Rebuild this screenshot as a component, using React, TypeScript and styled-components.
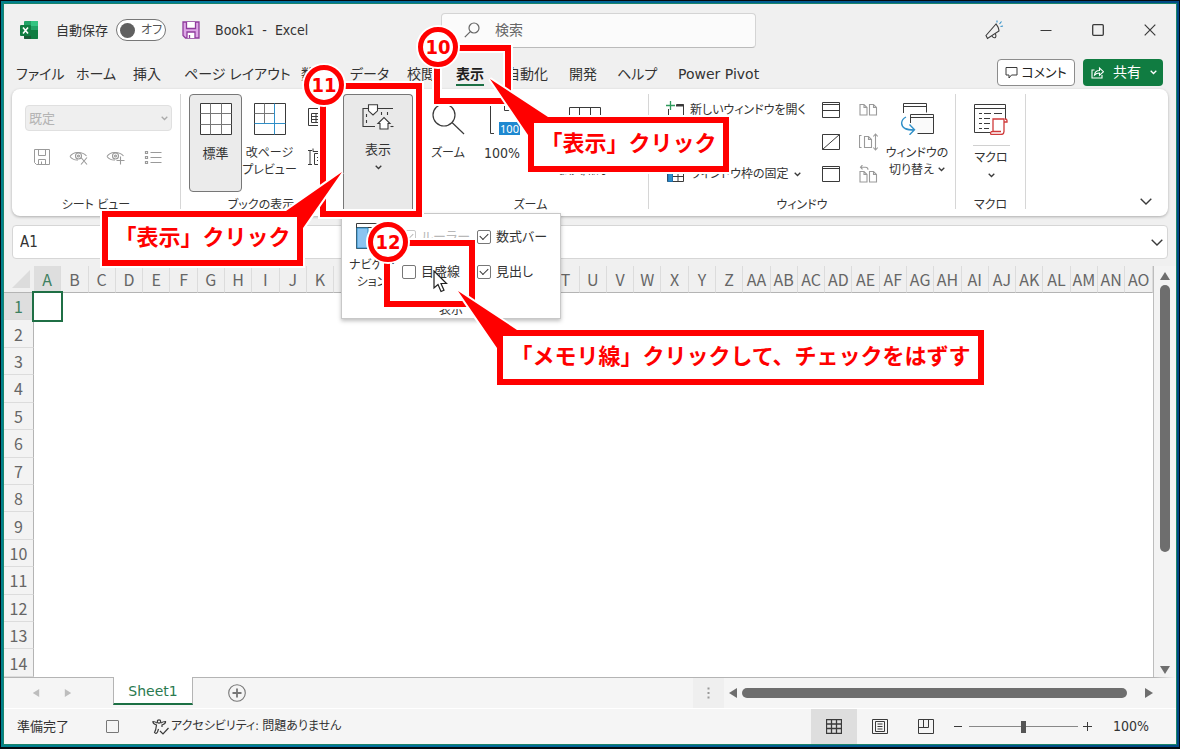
import React from "react";
import styled, { createGlobalStyle, css } from "styled-components";

const UI_FONT = `"DejaVu Sans Condensed", "Noto Sans CJK JP", sans-serif`;
const WIDE_FONT = `"DejaVu Sans", "Noto Sans CJK JP", sans-serif`;
const JP_FONT = `"Noto Sans CJK JP", sans-serif`;
const INK = "#3a3a3a";
const RED = "#ff0000";

const GlobalStyle = createGlobalStyle`
  *, *::before, *::after { box-sizing: border-box; }
  body {
    margin: 0;
    background: #00607f;
    color: #333;
    font: 13px/17px ${UI_FONT};
    font-feature-settings: "palt";
  }
  button, input, select {
    margin: 0;
    padding: 0;
    border: 0;
    background: none;
    color: inherit;
    font: inherit;
    font-feature-settings: inherit;
  }
  svg { display: block; flex: none; }
`;

/* ---------- window frame ---------- */

const Screen = styled.div`
  position: relative;
  height: 100vh;
  min-height: 640px;
  display: flex;
  border: 1px solid #050a10;
  border-bottom-width: 2px;
  padding: 2px;
  background: linear-gradient(90deg, #00808c, #0078a0 20%, #004a86);
`;

const AppWindow = styled.div`
  flex: 1;
  min-width: 0;
  display: flex;
  flex-direction: column;
  border: 1px solid #1a8468;
  background: #f0f0f0;
`;

/* ---------- title bar ---------- */

const TitleBar = styled.header`
  flex: none;
  height: 52px;
  display: grid;
  grid-template-columns: 1fr 315px 420px;
  align-items: center;
`;

const TitleLeft = styled.div`
  display: flex;
  align-items: center;
  padding-left: 16px;
`;

const AutoSave = styled.label`
  display: flex;
  align-items: center;
  gap: 8px;
  margin: 0 16px 0 18px;
`;

const Toggle = styled.button`
  display: flex;
  align-items: center;
  gap: 6px;
  width: 50px;
  height: 22px;
  padding-left: 3px;
  border: 1px solid #777;
  border-radius: 11px;
  background: #fff;
  color: #555;
  font-size: 12px;
  &::before {
    content: "";
    width: 15px;
    height: 15px;
    border-radius: 50%;
    background: #606060;
  }
`;

const DocTitle = styled.span`
  margin-left: 15px;
  font-size: 14px;
  white-space: pre;
`;

const SearchBox = styled.label`
  display: flex;
  align-items: center;
  gap: 15px;
  height: 35px;
  padding-left: 22px;
  border: 1px solid #d4d4d4;
  border-bottom-color: #bbb;
  border-radius: 4px;
  background: #fbfbfb;
  input {
    flex: 1;
    min-width: 0;
    font-size: 14px;
    outline: none;
  }
  input::placeholder { color: #666; opacity: 1; }
`;

const TitleRight = styled.div`
  display: flex;
  justify-content: flex-end;
  align-items: center;
  padding-right: 20px;
`;

const WindowButton = styled.button<{ $w?: number }>`
  width: ${(p) => p.$w ?? 52}px;
  height: 32px;
  display: flex;
  align-items: center;
  justify-content: flex-end;
`;

/* ---------- tabs ---------- */

const TabRow = styled.nav`
  flex: none;
  height: 33px;
  display: flex;
  align-items: center;
  padding: 0 13px 0 12px;
`;

const Tab = styled.button<{ $w: number; $active?: boolean; $latin?: boolean }>`
  width: ${(p) => p.$w}px;
  height: 28px;
  padding-top: 3px;
  text-align: left;
  white-space: nowrap;
  font-size: 14px;
  font-family: ${(p) => (p.$latin ? WIDE_FONT : UI_FONT)};
  ${(p) =>
    p.$active &&
    css`
      font-weight: 700;
      color: #1d1d1d;
      span {
        display: inline-block;
        padding: 3px 0 1px;
        border-bottom: 2px solid #1c7044;
      }
    `}
`;

const CommentButton = styled.button`
  display: flex;
  align-items: center;
  justify-content: center;
  gap: 3px;
  width: 78px;
  height: 27px;
  margin-left: auto;
  border: 1px solid #8c8c8c;
  border-radius: 4px;
  background: #fff;
  color: #222;
`;

const ShareButton = styled.button`
  display: flex;
  align-items: center;
  justify-content: space-between;
  width: 80px;
  height: 27px;
  margin-left: 8px;
  padding: 0 6px 0 8px;
  border-radius: 4px;
  background: #107c41;
  color: #fff;
  font-size: 14px;
`;

/* ---------- ribbon ---------- */

const Ribbon = styled.section`
  flex: none;
  display: flex;
  margin: 0 8px;
  padding: 5px 0 7px;
  border-radius: 8px;
  background: #fff;
  box-shadow: 0 1px 3px rgba(0, 0, 0, 0.28);
`;

const Group = styled.div<{ $w: number; $line?: boolean }>`
  flex: none;
  width: ${(p) => p.$w}px;
  height: 115px;
  display: flex;
  flex-direction: column;
  border-right: ${(p) => (p.$line ? "1px solid #d6d6d6" : "0")};
`;

const GroupBody = styled.div<{ $pad?: number }>`
  display: flex;
  align-items: flex-start;
  height: 105px;
  padding-left: ${(p) => p.$pad ?? 0}px;
`;

const GroupLabel = styled.div`
  height: 10px;
  line-height: 12px;
  font-size: 12px;
  text-align: center;
  white-space: nowrap;
`;

const SheetViewTools = styled.div`
  flex: 1;
  padding: 11px 8px 0 0;
`;

const ViewSelect = styled.div`
  position: relative;
  color: #b4b4b4;
  select {
    appearance: none;
    width: 100%;
    height: 26px;
    padding-left: 3px;
    border: 1px solid #e0e0e0;
    border-radius: 4px;
    background: #efefef;
    color: #b4b4b4;
    opacity: 1;
  }
  svg {
    position: absolute;
    right: 4px;
    top: 11px;
  }
`;

const ToolRow = styled.div`
  display: flex;
  justify-content: space-between;
  padding: 16px 9px 0 7px;
`;

const ToolButton = styled.button`
  display: flex;
  width: 20px;
  height: 20px;
  align-items: center;
  justify-content: center;
`;

const BigButton = styled.button<{ $w: number; $selected?: boolean }>`
  flex: none;
  width: ${(p) => p.$w}px;
  height: 98px;
  display: flex;
  flex-direction: column;
  align-items: center;
  padding-top: ${(p) => (p.$selected ? 8 : 9)}px;
  border: ${(p) => (p.$selected ? "1px solid #777" : "0")};
  border-radius: 4px;
  background: ${(p) => (p.$selected ? "#ebebeb" : "none")};
  white-space: nowrap;
  font-size: 12px;
`;

const BigText = styled.span<{ $size?: number }>`
  display: block;
  margin-top: 10px;
  font-size: ${(p) => p.$size ?? 12}px;
  line-height: 17px;
  svg { display: inline-block; margin-left: 4px; vertical-align: 2px; }
`;

const MacroText = styled.span`
  display: flex;
  flex-direction: column;
  align-items: center;
  gap: 6px;
  width: 37px;
  margin-top: 10px;
  padding-top: 4px;
  border-top: 1px solid #d0d0d0;
  line-height: 17px;
`;

const SideIcons = styled.div`
  padding: 14px 0 0 11px;
  display: flex;
  flex-direction: column;
  gap: 22px;
`;

const ViewHolder = styled.div`
  position: relative;
  margin: 0 0 0 2px;
`;

const ViewButton = styled.button`
  width: 70px;
  height: 119px;
  display: flex;
  flex-direction: column;
  align-items: center;
  padding-top: 9px;
  border: 1px solid #777;
  border-bottom: 0;
  border-radius: 4px 4px 0 0;
  background: #e9e9e9;
  span { margin: 11px 0 7px; line-height: 17px; }
`;

const List = styled.div`
  width: 155px;
`;

const ListButton = styled.button`
  display: flex;
  align-items: center;
  gap: 5px;
  height: 32px;
  font-size: 12px;
  white-space: nowrap;
`;

const IconColumn = styled.div`
  width: 20px;
  margin-right: 17px;
  button { height: 32px; display: flex; align-items: center; width: 20px; justify-content: center; }
`;

const CollapseButton = styled.button`
  align-self: flex-end;
  margin: 0 16px 2px auto;
  padding: 2px 0;
`;

/* ---------- drop-down panel ---------- */

const Panel = styled.div`
  position: absolute;
  z-index: 2;
  left: -2px;
  top: 119px;
  width: 220px;
  height: 106px;
  display: flex;
  flex-direction: column;
  border: 1px solid #c8c8c8;
  background: #fff;
  box-shadow: 0 2px 4px rgba(0, 0, 0, 0.25);
`;

const PanelBody = styled.div`
  display: flex;
  flex: 1;
`;

const NavButton = styled.button`
  width: 60px;
  display: flex;
  flex-direction: column;
  align-items: center;
  padding-top: 9px;
  font-size: 12px;
  line-height: 17px;
  span { margin-top: 8px; }
`;

const CheckGrid = styled.div`
  display: grid;
  grid-template-columns: 75px 75px;
  grid-template-rows: 35px 35px;
  padding-top: 5px;
`;

const Check = styled.label<{ $off?: boolean }>`
  display: flex;
  align-items: center;
  gap: 5px;
  white-space: nowrap;
  color: ${(p) => (p.$off ? "#b8b8b8" : "#333")};
  input {
    appearance: none;
    position: relative;
    flex: none;
    width: 14px;
    height: 14px;
    border: 1px solid ${(p) => (p.$off ? "#c8c8c8" : "#777")};
    border-radius: 2px;
    background: #fff;
  }
  input:checked::after {
    content: "";
    position: absolute;
    left: 2px;
    top: 2px;
    width: 8px;
    height: 5px;
    border: solid currentColor;
    border-width: 0 0 1px 1px;
    transform: rotate(-45deg);
  }
`;

const PanelLabel = styled.div`
  height: 16px;
  line-height: 16px;
  font-size: 12px;
  text-align: center;
`;

/* ---------- formula bar ---------- */

const FormulaBar = styled.div`
  flex: none;
  display: flex;
  align-items: center;
  height: 34px;
  margin: 9px 8px 7px;
  padding: 0 4px 0 7px;
  border: 1px solid #d6d6d6;
  border-radius: 4px;
  background: #fff;
  font-size: 15px;
`;

const NameBox = styled.input`
  width: 90px;
  outline: none;
`;

const FormulaInput = styled.input`
  flex: 1;
  min-width: 0;
  outline: none;
`;

/* ---------- sheet ---------- */

const SheetArea = styled.main`
  flex: 1;
  min-height: 0;
  display: grid;
  grid-template-columns: minmax(0, 1fr) 22px;
  grid-template-rows: minmax(0, 1fr);
  background: #f3f3f3;
`;

const Grid = styled.table`
  width: 100%;
  height: 100%;
  table-layout: fixed;
  border-collapse: separate;
  border-spacing: 0;
  background: #fff;
  border-right: 1px solid #bdbdbd;
  font-family: ${JP_FONT};
  color: #666;
  th, td { padding: 0; }
`;

const Corner = styled.th`
  width: 30px;
  height: 27px;
  background: #f0f0f0;
  border-bottom: 1px solid #b4b4b4;
  svg { margin: 0 0 0 8px; }
`;

const ColHead = styled.th<{ $on?: boolean }>`
  height: 27px;
  border-bottom: 1px solid ${(p) => (p.$on ? "#217346" : "#b4b4b4")};
  border-right: 1px solid #dcdcdc;
  background: ${(p) => (p.$on ? "#dedede" : "#f0f0f0")};
  color: ${(p) => (p.$on ? "#3d8060" : "inherit")};
  font-weight: 400;
  font-size: 16px;
  line-height: 20px;
`;

const RowHead = styled.th<{ $on?: boolean }>`
  border-right: 1px solid #b4b4b4;
  border-bottom: 1px solid #dcdcdc;
  background: ${(p) => (p.$on ? "#dedede" : "#f3f3f3")};
  color: ${(p) => (p.$on ? "#3d8060" : "inherit")};
  font-weight: 400;
  font-size: 16px;
  line-height: 20px;
`;

const ActiveCell = styled.td`
  position: relative;
  &::after {
    content: "";
    position: absolute;
    inset: -2px;
    border: 2px solid #1f6f45;
  }
`;

const VScroll = styled.div`
  display: flex;
  flex-direction: column;
  align-items: center;
  padding: 5px 0 2px;
`;

const VThumb = styled.div`
  width: 10px;
  height: 66%;
  margin: 4px 0 auto;
  border-radius: 5px;
  background: #6e6e6e;
`;

/* ---------- sheet tabs ---------- */

const SheetTabs = styled.div`
  flex: none;
  display: flex;
  align-items: center;
  height: 32px;
  background: #f5f5f5;
  border-bottom: 1px solid #fff;
`;

const TabsLeft = styled.div`
  flex: 1;
  align-self: stretch;
  display: flex;
  align-items: center;
  border-top: 1px solid #b4b4b4;
`;

const TabNav = styled.div`
  display: flex;
  width: 109px;
  padding-left: 28px;
  gap: 24px;
`;

const SheetTab = styled.button`
  align-self: flex-start;
  width: 80px;
  height: 28px;
  margin-top: -1px;
  padding-top: 3px;
  border: solid #b4b4b4;
  border-width: 0 1px;
  border-bottom: 2px solid #1c7044;
  background: #fff;
  color: #2b7a50;
  font-size: 14px;
  font-family: ${WIDE_FONT};
`;

const AddSheet = styled.button`
  margin-left: 35px;
`;

const HScroll = styled.div`
  width: 483px;
  align-self: stretch;
  display: flex;
  align-items: center;
  border-top: 1px solid #b4b4b4;
  border-right: 22px solid #f5f5f5;
`;

const Splitter = styled.div`
  width: 31px;
  align-self: stretch;
  display: flex;
  align-items: center;
  justify-content: center;
  background: #efefef;
  margin-right: 4px;
`;

const HThumb = styled.div`
  flex: 1;
  height: 10px;
  margin: 0 17px 0 4px;
  border-radius: 5px;
  background: #6e6e6e;
`;

/* ---------- status bar ---------- */

const StatusBar = styled.footer`
  flex: none;
  display: flex;
  align-items: center;
  height: 35px;
  padding: 0 25px 0 13px;
  background: #f5f5f5;
`;

const MacroRecord = styled.button`
  width: 13px;
  height: 13px;
  margin: 0 33px 0 37px;
  border: 1px solid #777;
  border-radius: 1px;
`;

const Accessibility = styled.button`
  display: flex;
  align-items: center;
  gap: 2px;
  white-space: nowrap;
  font-size: 12px;
`;

const ViewModes = styled.div`
  display: flex;
  align-self: stretch;
  margin-left: auto;
`;

const ViewMode = styled.button<{ $on?: boolean }>`
  width: 46px;
  display: flex;
  align-items: center;
  justify-content: center;
  background: ${(p) => (p.$on ? "#dedede" : "none")};
`;

const ZoomSlider = styled.input`
  appearance: none;
  width: 109px;
  height: 13px;
  margin: 0 5px;
  background: linear-gradient(#888, #888) center / 100% 1px no-repeat;
  &::-webkit-slider-thumb {
    appearance: none;
    width: 5px;
    height: 12px;
    background: #555;
  }
`;

const ZoomStep = styled.button`
  display: flex;
  padding: 4px 0;
`;

const ZoomValue = styled.button`
  width: 38px;
  margin-left: 21px;
  text-align: left;
  font-size: 14px;
`;

/* ---------- annotations ---------- */

const Notes = styled.div`
  position: absolute;
  inset: -1px;
  z-index: 5;
  pointer-events: none;
  font-family: ${JP_FONT};
  font-feature-settings: normal;
  color: ${RED};
`;

type Rect = { $x: number; $y: number; $w: number; $h: number };

const at = css<Rect>`
  position: absolute;
  left: ${(p) => p.$x}px;
  top: ${(p) => p.$y}px;
  width: ${(p) => p.$w}px;
  height: ${(p) => p.$h}px;
`;

const Frame = styled.div<Rect>`
  ${at}
  border: 6px solid ${RED};
  box-shadow: 0 0 0 2px #fff, inset 0 0 0 2px #fff;
`;

const Badge = styled.div<{ $x: number; $y: number }>`
  position: absolute;
  left: ${(p) => p.$x}px;
  top: ${(p) => p.$y}px;
  width: 40px;
  height: 40px;
  border: 5px solid ${RED};
  border-radius: 50%;
  background: #fff;
  box-shadow: 0 0 0 2px #fff;
  display: flex;
  align-items: center;
  justify-content: center;
  font: 700 20px/30px "DejaVu Sans Condensed", sans-serif;
`;

const Tails = styled.svg`
  position: absolute;
  left: 0;
  top: 0;
  paint-order: stroke;
`;

const Callout = styled.div<Rect>`
  ${at}
  display: flex;
  align-items: center;
  justify-content: center;
  padding-bottom: 8px;
  border: 6px solid ${RED};
  background: #fff;
  font-size: 22px;
  line-height: 30px;
  font-weight: 700;
  white-space: nowrap;
`;

const Pointer = styled.svg`
  position: absolute;
  left: 433px;
  top: 270px;
`;

/* ---------- icons ---------- */

type IconProps = {
  w?: number;
  h?: number;
  color?: string;
  sw?: number;
  children: React.ReactNode;
};

const Icon = ({ w = 16, h = w, color = INK, sw = 1, children }: IconProps) => (
  <svg width={w} height={h} viewBox={`0 0 ${w} ${h}`} fill="none" stroke={color} strokeWidth={sw} aria-hidden="true">
    {children}
  </svg>
);

const Chevron = ({ w = 7, color = INK }: { w?: number; color?: string }) => (
  <Icon w={w} h={Math.ceil(w / 2) + 1} color={color} sw={w > 9 ? 1.4 : 1.3}>
    <path d={`M.7 .8 L${w / 2} ${w / 2} L${w - 0.7} .8`} />
  </Icon>
);

const ExcelLogo = () => (
  <svg width="18" height="18" viewBox="0 0 18 18" aria-hidden="true">
    <path d="M5 0h12a1 1 0 0 1 1 1v16a1 1 0 0 1-1 1H5a1 1 0 0 1-1-1V1a1 1 0 0 1 1-1z" fill="#21a366" />
    <path d="M11 0h6a1 1 0 0 1 1 1v4h-7z" fill="#33c481" />
    <path d="M4 9h7v9H5a1 1 0 0 1-1-1z" fill="#185c37" />
    <path d="M11 9h7v8a1 1 0 0 1-1 1h-6z" fill="#107c41" />
    <rect y="4" width="11" height="11" rx="1" fill="#107c41" />
    <path d="M3 6.500l5 6M8 6.500l-5 6" stroke="#fff" strokeWidth="1.600" />
  </svg>
);

const SaveIcon = () => (
  <Icon w={18} color="#8f3b9c" sw={1.3}>
    <path d="M1 1h16v16H3.500L1 14.500z" fill="#dda6e6" />
    <path d="M4.500 1v6.500h9V1" fill="#fff" />
    <path d="M5 17v-6h8v6" fill="#fff" />
    <path d="M7.500 17v-3" />
  </Icon>
);

const SaveOutline = () => (
  <Icon w={18} color="#9a9a9a">
    <path d="M1.500 1.500h15v15h-13l-2-2zM5.500 1.500v6h7v-6M5.500 16.500v-5h7v5M8.500 16.500v-3" />
  </Icon>
);

const SearchIcon = () => (
  <Icon w={16} color="#666" sw={1.2}>
    <circle cx="10" cy="6" r="5" />
    <path d="M6.300 9.700L.8 15.200" />
  </Icon>
);

const EyeIcon = ({ plus }: { plus?: boolean }) => (
  <Icon w={20} color="#9a9a9a" sw={1.1}>
    <path d="M1 9.500C4 4.500 13 4 17.500 9M1 9.500c2 2.500 5 3.800 8 3.500" />
    <circle cx="9.500" cy="9" r="3" />
    <circle cx="9.500" cy="9" r="1" />
    {plus ? <path d="M14.500 9.500v8M10.500 13.500h8" /> : <path d="M12 10.500l6 7M18 10.500l-6 7" />}
  </Icon>
);

const OptionsIcon = () => (
  <Icon w={18} color="#9a9a9a" sw={1.2}>
    <path d="M6.500 4.500h11M6.500 9.500h11M6.500 14.500h11" />
    <path d="M1.500 3.500h2v2h-2zM1.500 8.500h2v2h-2zM1.500 13.500h2v2h-2z" />
  </Icon>
);

const NormalIcon = () => (
  <Icon w={32}>
    <path d="M.5.500h31v31H.500z" fill="#fff" />
    <path d="M10.500.500v31M21.500.500v31M.5 10.500h31M.5 21.500h31" stroke="#777" />
  </Icon>
);

const PageBreakIcon = () => (
  <Icon w={32}>
    <path d="M.5.500h31v31H.500z" fill="#fff" />
    <path d="M10.500.500v20M.5 10.500h20" stroke="#777" />
    <path d="M20.500.500v31M.5 20.500h31" stroke="#2f8fc8" />
  </Icon>
);

const PageLayoutIcon = () => (
  <Icon w={16} h={18}>
    <path d="M.5.500h11l4 4v13H.500zM3.500 5.500h9v9h-9zM3.500 8.500h9M3.500 11.500h9M8 5.500v9" />
  </Icon>
);

const CustomViewIcon = () => (
  <Icon w={16} h={18}>
    <path d="M0 2.500h4M2 2.500v14M0 16.500h4M6.500 5.500h9v11h-9zM5 .5v3h11M9 9.500h4M9 12.500h4" />
  </Icon>
);

const ShowIcon = () => (
  <Icon w={32} h={26} sw={1.1}>
    <path d="M6 4.500H1v18h12" />
    <path d="M6.500.8h9v6L11 11 6.500 6.800z" fill="#fff" />
    <path d="M15.500 4.500H31M4.500 10v3M4.500 16v3M19.500 8v3M25.500 8v3" />
    <path d="M16 19.500l6-6 6 6h-2v5.500h-8v-5.500z" fill="#fff" />
    <path d="M28.500 22.500h3" />
  </Icon>
);

const ZoomIcon = () => (
  <Icon w={34} h={32} sw={1.2}>
    <circle cx="13" cy="12" r="11" />
    <path d="M21 19.500L33 31" />
  </Icon>
);

const HundredIcon = () => (
  <svg width="36" height="32" viewBox="0 0 36 32" aria-hidden="true">
    <path d="M10 30.500H6.500V1.500h18l6 6V15" fill="none" stroke={INK} />
    <path d="M20.500 1.500v6h6" fill="none" stroke={INK} />
    <rect x="15" y="19" width="21" height="13" fill="#1e88d0" />
    <text x="25.500" y="30" fontSize="11" fill="#fff" textAnchor="middle" fontFamily="Noto Sans">
      100
    </text>
  </svg>
);

const SelectionZoomIcon = () => (
  <Icon w={32}>
    <path d="M.5 4.500h31v24H.500zM.5 12.500h31M.5 20.500h31M10.500 4.500v24M21.500 4.500v24" />
    <path d="M10 12.500h12" stroke="#2f8fc8" />
  </Icon>
);

const NewWindowIcon = () => (
  <Icon w={19} h={18}>
    <path d="M2.500 8v9.500h15v-14h-7" />
    <path d="M10 4.500h8" strokeWidth="2" />
    <path d="M4.500 0v9M0 4.500h9" stroke="#2e9a5c" strokeWidth="1.300" />
  </Icon>
);

const ArrangeIcon = () => (
  <Icon w={19} h={18}>
    <path d="M1.500 1.500h16v15h-16zM1.500 9h16M9.500 1.500v15" />
  </Icon>
);

const FreezeIcon = () => (
  <Icon w={19} h={18}>
    <path d="M1.500 1.500h16v15h-16zM1.500 6.500h16M1.500 11.500h16M6.500 1.500v15M12 1.500v15" />
    <path d="M2 7h4.500v9.500H2z" fill="#2f8fc8" stroke="#1e6fae" />
  </Icon>
);

const WinShape = ({ kind }: { kind: "split" | "hide" | "show" }) => (
  <Icon w={18} h={16}>
    <path d="M.5.500h17v15H.500z" />
    {kind === "split" && <path d="M.5 2.500h17M.5 8.500h17" />}
    {kind === "hide" && <path d="M.5 15.500l17-15" />}
    {kind === "show" && <path d="M.5 2.500h17" />}
  </Icon>
);

const PagesIcon = ({ kind }: { kind: "side" | "sync" | "reset" }) => (
  <Icon w={19} h={18} color="#9a9a9a" sw={1.1}>
    {kind === "sync" ? (
      <>
        <path d="M2.500 2.500H.500v12h2M5.500 3.500h4l3 3v8h-7zM9.500 3.500v3h3" />
        <path d="M16.500 1v16M14.300 3.500L16.500 1l2.200 2.500M14.300 14.500l2.200 2.500 2.200-2.500" />
      </>
    ) : (
      <>
        <path
          d="M1 6.500h4l3 3v7.500H1zM5 6.500v3h3M10.500 6.500h4l3 3v7.500h-7zM14.500 6.500v3h3"
          transform={kind === "side" ? "translate(0 -3)" : undefined}
        />
        {kind === "reset" && <path d="M3.500 0L1.500 2.200l2 2.200M1.500 2.200h5q2.500 0 2.500 2.500" />}
      </>
    )}
  </Icon>
);

const SwitchIcon = () => (
  <Icon w={34} h={32}>
    <path d="M3.500 10V.500h23v9" />
    <path d="M3.500 3.500h23" />
    <path d="M10.500 20v-8.500h23v19h-16" fill="#fafafa" />
    <path d="M10.500 14.500h23" />
    <path d="M6 14C.5 17 .3 22.500 5 25.500q3 1.500 9 1.500M9.500 21.500l5 5.300-5 5" stroke="#2f8fc8" strokeWidth="1.400" />
  </Icon>
);

const MacroIcon = () => (
  <Icon w={34} h={32}>
    <path d="M16 29.500H.500V1.500h31V16" />
    <path d="M.5 5.500h31" />
    <path d="M5 10.500h3M10 10.500h7M20 10.500h8M5 15.500h3M10 15.500h6M5 20.500h3M10 20.500h6M5 25.500h3M10 25.500h5" />
    <path d="M19 28V16h11v12.500q0 3-3 3H17q-1.500-3 2-3h8M30 19h3v-1.500q0-1.500-2-1.500" stroke="#cf3a3a" strokeWidth="1.300" fill="#fff" />
  </Icon>
);

const NavIcon = () => (
  <Icon w={32} h={26}>
    <path d="M.5.500h31v25H.500zM.5 4.500h31" />
    <path d="M1 5h11v20H1z" fill="#8cc4f0" stroke="#2f8fc8" />
  </Icon>
);

const MegaphoneIcon = () => (
  <Icon w={20} sw={1.1}>
    <path d="M12 4L2 15.500l1.500 3 11.500-7.500q0-1.500-1-4zM8 16q1.500 2.500 3.500 1.500 1-1 0-3.500" />
    <path d="M13 2.500V.500M15.500 4l2-2.500M16.500 6.500l2.500-.5" stroke="#2f8fc8" />
  </Icon>
);

const CommentIcon = () => (
  <Icon w={13}>
    <path d="M1 1.500h11v7.500H6.500l-2.500 3V9H1z" />
  </Icon>
);

const ShareIcon = () => (
  <Icon w={13} color="#fff" sw={1.1}>
    <path d="M3.500 4H1v8h10V9M3.500 9q.5-4.500 5-4.500V2l4 3.700-4 3.600V7q-3 0-5 2z" />
  </Icon>
);

const A11yIcon = () => (
  <Icon w={17} h={16} sw={1.2}>
    <circle cx="7" cy="2.500" r="1.700" />
    <path d="M5 4Q3 2.500 1 2.500q-.5 2 3.500 3.500-.5 5-2 7.500 1.500 2 3-.5l1-3M9 4q2-1.500 4.500-1.500.5 2-3.500 3.500v2" />
    <path d="M8 12l3 3 5.500-6" />
  </Icon>
);

const Arrow = ({ dir, color = "#6e6e6e", s = 10 }: { dir: "up" | "down" | "left" | "right"; color?: string; s?: number }) => {
  const points = {
    up: "5,1 10,9 0,9",
    down: "5,9 10,1 0,1",
    left: "1,5 9,0 9,10",
    right: "9,5 1,0 1,10",
  }[dir];
  return (
    <svg width={s} height={s} viewBox="0 0 10 10" aria-hidden="true">
      <polygon points={points} fill={color} />
    </svg>
  );
};

/* ---------- data ---------- */

const tabs = [
  { name: "ファイル", w: 60 },
  { name: "ホーム", w: 57 },
  { name: "挿入", w: 51 },
  { name: "ページ レイアウト", w: 117 },
  { name: "数式", w: 49 },
  { name: "データ", w: 57 },
  { name: "校閲", w: 49 },
  { name: "表示", w: 50, active: true },
  { name: "自動化", w: 63 },
  { name: "開発", w: 48 },
  { name: "ヘルプ", w: 61 },
  { name: "Power Pivot", w: 90, latin: true },
];

const columnName = (i: number): string =>
  (i >= 26 ? String.fromCharCode(64 + Math.floor(i / 26)) : "") + String.fromCharCode(65 + (i % 26));

const columns = Array.from({ length: 41 }, (_, i) => columnName(i));
const rows = Array.from({ length: 14 }, (_, i) => i + 1);

/* ---------- page ---------- */

const RibbonBar = () => (
  <Ribbon>
    <Group $w={169} $line>
      <GroupBody $pad={13}>
        <SheetViewTools>
          <ViewSelect>
            <select disabled aria-label="シート ビュー">
              <option>既定</option>
            </select>
            <Chevron color="#aaa" />
          </ViewSelect>
          <ToolRow>
            <ToolButton aria-label="保持"><SaveOutline /></ToolButton>
            <ToolButton aria-label="終了"><EyeIcon /></ToolButton>
            <ToolButton aria-label="新規"><EyeIcon plus /></ToolButton>
            <ToolButton aria-label="オプション"><OptionsIcon /></ToolButton>
          </ToolRow>
        </SheetViewTools>
      </GroupBody>
      <GroupLabel>シート ビュー</GroupLabel>
    </Group>

    <Group $w={160}>
      <GroupBody $pad={8}>
        <BigButton $w={53} $selected>
          <NormalIcon />
          <BigText $size={13}>標準</BigText>
        </BigButton>
        <BigButton $w={55}>
          <PageBreakIcon />
          <BigText>改ページ<br />プレビュー</BigText>
        </BigButton>
        <SideIcons>
          <PageLayoutIcon />
          <CustomViewIcon />
        </SideIcons>
      </GroupBody>
      <GroupLabel>ブックの表示</GroupLabel>
    </Group>

    <Group $w={72}>
      <ViewHolder>
        <ViewButton aria-expanded="true">
          <ShowIcon />
          <span>表示</span>
          <Chevron />
        </ViewButton>
        <Panel>
          <PanelBody>
            <NavButton>
              <NavIcon />
              <span>ナビゲー<br />ション</span>
            </NavButton>
            <CheckGrid>
              <Check $off><input type="checkbox" defaultChecked disabled />ルーラー</Check>
              <Check><input type="checkbox" defaultChecked />数式バー</Check>
              <Check><input type="checkbox" />目盛線</Check>
              <Check><input type="checkbox" defaultChecked />見出し</Check>
            </CheckGrid>
          </PanelBody>
          <PanelLabel>表示</PanelLabel>
        </Panel>
      </ViewHolder>
    </Group>

    <Group $w={236} $line>
      <GroupBody $pad={8}>
        <BigButton $w={54}>
          <ZoomIcon />
          <BigText>ズーム</BigText>
        </BigButton>
        <BigButton $w={54}>
          <HundredIcon />
          <BigText $size={14}>100%</BigText>
        </BigButton>
        <BigButton $w={112}>
          <SelectionZoomIcon />
          <BigText>選択範囲に合わせて<br />拡大/縮小</BigText>
        </BigButton>
      </GroupBody>
      <GroupLabel>ズーム</GroupLabel>
    </Group>

    <Group $w={307} $line>
      <GroupBody $pad={17}>
        <List>
          <ListButton><NewWindowIcon />新しいウィンドウを開く</ListButton>
          <ListButton><ArrangeIcon />整列</ListButton>
          <ListButton><FreezeIcon />ウィンドウ枠の固定<Chevron /></ListButton>
        </List>
        <IconColumn>
          <button aria-label="分割"><WinShape kind="split" /></button>
          <button aria-label="表示しない"><WinShape kind="hide" /></button>
          <button aria-label="再表示"><WinShape kind="show" /></button>
        </IconColumn>
        <IconColumn>
          <button aria-label="並べて比較"><PagesIcon kind="side" /></button>
          <button aria-label="同時にスクロール"><PagesIcon kind="sync" /></button>
          <button aria-label="ウィンドウの位置を元に戻す"><PagesIcon kind="reset" /></button>
        </IconColumn>
        <BigButton $w={44}>
          <SwitchIcon />
          <BigText>ウィンドウの<br />切り替え<Chevron /></BigText>
        </BigButton>
      </GroupBody>
      <GroupLabel>ウィンドウ</GroupLabel>
    </Group>

    <Group $w={70} $line>
      <GroupBody>
        <BigButton $w={70}>
          <MacroIcon />
          <MacroText>マクロ<Chevron /></MacroText>
        </BigButton>
      </GroupBody>
      <GroupLabel>マクロ</GroupLabel>
    </Group>

    <CollapseButton aria-label="リボンの表示オプション"><Chevron w={12} /></CollapseButton>
  </Ribbon>
);

const Annotations = () => (
  <Notes>
    <Frame $x={434} $y={45} $w={77} $h={59} />
    <Frame $x={320} $y={83} $w={102} $h={134} />
    <Frame $x={384} $y={240} $w={91} $h={67} />
    <Tails width="1000" height="400" fill={RED} stroke="#fff" strokeWidth="4">
      <path d="M490 79L548 117H729V172H528V135Z" />
      <path d="M342 172L303 228V266H102V211H286Z" />
      <path d="M458 291L517 330H984V385H497V348Z" />
    </Tails>
    <Callout $x={528} $y={117} $w={201} $h={55}>「表示」クリック</Callout>
    <Callout $x={102} $y={211} $w={201} $h={55}>「表示」クリック</Callout>
    <Callout $x={497} $y={330} $w={487} $h={55}>「メモリ線」クリックして、チェックをはずす</Callout>
    <Badge $x={418} $y={27}>10</Badge>
    <Badge $x={304} $y={65}>11</Badge>
    <Badge $x={368} $y={222}>12</Badge>
    <Pointer width="15" height="24" viewBox="0 0 15 24">
      <path d="M1 1v17l4-3.500 3 7 3-1.300-3-6.700h5.500z" fill="#fff" stroke="#222" strokeWidth="1.200" />
    </Pointer>
  </Notes>
);

export default function App() {
  return (
    <Screen>
      <GlobalStyle />
      <AppWindow>
        <TitleBar>
          <TitleLeft>
            <ExcelLogo />
            <AutoSave>
              自動保存
              <Toggle role="switch" aria-checked="false">オフ</Toggle>
            </AutoSave>
            <SaveIcon />
            <DocTitle>{"Book1  -  Excel"}</DocTitle>
          </TitleLeft>
          <SearchBox>
            <SearchIcon />
            <input placeholder="検索" aria-label="検索" />
          </SearchBox>
          <TitleRight>
            <WindowButton aria-label="新機能"><MegaphoneIcon /></WindowButton>
            <WindowButton aria-label="最小化" $w={48}>
              <Icon w={12}><path d="M.5 6.500h11" /></Icon>
            </WindowButton>
            <WindowButton aria-label="最大化">
              <Icon w={12} sw={1.3}><rect x=".7" y=".7" width="10.600" height="10.600" rx="1" /></Icon>
            </WindowButton>
            <WindowButton aria-label="閉じる">
              <Icon w={12} sw={1.2}><path d="M.7.700l10.600 10.600M11.300.700L.7 11.300" /></Icon>
            </WindowButton>
          </TitleRight>
        </TitleBar>

        <TabRow>
          {tabs.map((t) => (
            <Tab key={t.name} $w={t.w} $active={t.active} $latin={t.latin}>
              <span>{t.name}</span>
            </Tab>
          ))}
          <CommentButton><CommentIcon />コメント</CommentButton>
          <ShareButton><ShareIcon />共有<Chevron color="#fff" /></ShareButton>
        </TabRow>

        <RibbonBar />

        <FormulaBar>
          <NameBox defaultValue="A1" aria-label="名前ボックス" />
          <FormulaInput aria-label="数式バー" />
          <Chevron w={12} />
        </FormulaBar>

        <SheetArea>
          <Grid>
            <thead>
              <tr>
                <Corner aria-label="すべて選択">
                  <svg width="18" height="18" viewBox="0 0 18 18"><path d="M18 0v18H0z" fill="#dcdcdc" /></svg>
                </Corner>
                {columns.map((c, i) => (
                  <ColHead key={c} scope="col" $on={i === 0}>{c}</ColHead>
                ))}
              </tr>
            </thead>
            <tbody>
              {rows.map((r) => (
                <tr key={r}>
                  <RowHead scope="row" $on={r === 1}>{r}</RowHead>
                  {r === 1 && <ActiveCell />}
                  <td colSpan={r === 1 ? 40 : 41} />
                </tr>
              ))}
            </tbody>
          </Grid>
          <VScroll>
            <Arrow dir="up" />
            <VThumb />
            <Arrow dir="down" />
          </VScroll>
        </SheetArea>

        <SheetTabs>
          <TabsLeft>
            <TabNav>
              <Arrow dir="left" color="#bdbdbd" s={8} />
              <Arrow dir="right" color="#bdbdbd" s={8} />
            </TabNav>
            <SheetTab>Sheet1</SheetTab>
            <AddSheet aria-label="新しいシート">
              <Icon w={18} color="#777" sw={1.1}>
                <circle cx="9" cy="9" r="8.300" />
                <path d="M9 4.500v9M4.500 9h9" strokeWidth="1.800" />
              </Icon>
            </AddSheet>
          </TabsLeft>
          <HScroll>
            <Splitter>
              <svg width="3" height="12" viewBox="0 0 3 12" fill="#999">
                <path d="M.5.500h2v2h-2zM.5 5h2v2h-2zM.5 9.500h2v2h-2z" />
              </svg>
            </Splitter>
            <Arrow dir="left" />
            <HThumb />
            <Arrow dir="right" />
          </HScroll>
        </SheetTabs>

        <StatusBar>
          準備完了
          <MacroRecord aria-label="マクロの記録" />
          <Accessibility><A11yIcon />アクセシビリティ: 問題ありません</Accessibility>
          <ViewModes>
            <ViewMode $on aria-label="標準">
              <Icon w={16} h={15}>
                <path d="M.5.500h15v14H.500zM5.500.500v14M10.500.500v14M.5 5h15M.5 9.500h15" strokeWidth="1.300" />
              </Icon>
            </ViewMode>
            <ViewMode aria-label="ページ レイアウト">
              <Icon w={16} h={15}>
                <path d="M.5.500h15v14H.500zM3.500 2.500h9v10h-9z" />
                <path d="M5.500 5h5M5.500 7.500h5M5.500 10h5" />
              </Icon>
            </ViewMode>
            <ViewMode aria-label="改ページ プレビュー">
              <Icon w={16} h={15}>
                <path d="M.5.500h15v14H.500zM.5 8.500h10v-8M5.500.500v8" />
              </Icon>
            </ViewMode>
          </ViewModes>
          <ZoomStep aria-label="縮小">
            <Icon w={15} h={9}><path d="M5 4.500h8" /></Icon>
          </ZoomStep>
          <ZoomSlider type="range" min={0} max={100} defaultValue={50} aria-label="ズーム" />
          <ZoomStep aria-label="拡大">
            <Icon w={9}><path d="M0 4.500h9M4.500 0v9" /></Icon>
          </ZoomStep>
          <ZoomValue>100%</ZoomValue>
        </StatusBar>
      </AppWindow>
      <Annotations />
    </Screen>
  );
}
